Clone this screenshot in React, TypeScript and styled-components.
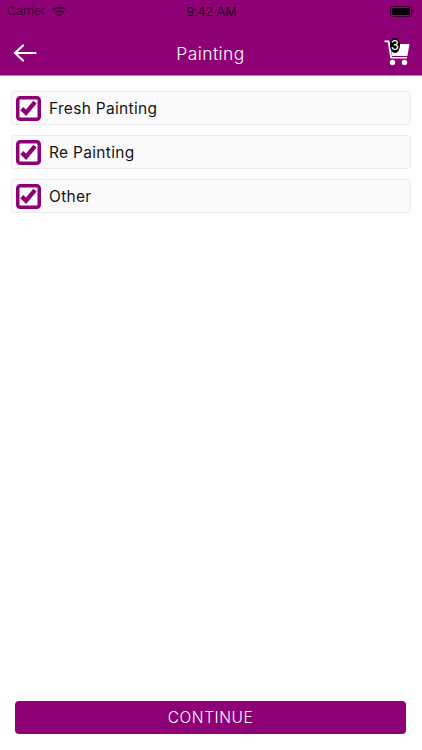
import React from "react";
import styled, { createGlobalStyle } from "styled-components";

const PURPLE = "#8e0076";

const GlobalStyle = createGlobalStyle`
  html, body {
    margin: 0;
    padding: 0;
    background: #fff;
  }
`;

const Page = styled.div`
  width: 422px;
  height: 750px;
  display: flex;
  flex-direction: column;
  font-family: Inter, "Noto Sans", sans-serif;
  overflow: hidden;
`;

const Header = styled.header`
  height: 75px;
  flex: none;
  background: ${PURPLE};
  border-bottom: 1px solid #c77fba;
  box-sizing: content-box;
  display: flex;
  flex-direction: column;
`;

const StatusBar = styled.div`
  height: 22px;
  padding: 0 8px 0 7px;
  display: grid;
  grid-template-columns: 1fr auto 1fr;
  align-items: center;
  color: #3d0033;
  font-family: "Liberation Sans", sans-serif;
`;

const Carrier = styled.div`
  display: flex;
  align-items: center;
  gap: 7px;
  font-size: 12.5px;
`;

const Clock = styled.div`
  color: #26001f;
  font-size: 13.5px;
  letter-spacing: 0.1px;
  margin-left: 2px;
`;

const BatteryBox = styled.div`
  justify-self: end;
  display: flex;
`;

const NavBar = styled.div`
  flex: 1;
  display: flex;
  align-items: center;
  justify-content: space-between;
  padding: 9px 12px 0 13px;
`;

const Title = styled.div`
  color: #fff;
  font-size: 17.5px;
  letter-spacing: 0.4px;
  font-weight: 300;
`;

const Cart = styled.div`
  position: relative;
  width: 26px;
  height: 26px;
`;

const CartCount = styled.span`
  position: absolute;
  top: -2px;
  left: 6px;
  width: 10px;
  height: 15px;
  border-radius: 50%;
  background: #000;
  color: #fff;
  font-family: "Liberation Sans", sans-serif;
  font-size: 14px;
  line-height: 15px;
  text-align: center;
`;

const List = styled.main`
  flex: 1;
  display: flex;
  flex-direction: column;
  gap: 10px;
  padding: 15px 11px 0;
`;

const Row = styled.div`
  height: 34px;
  box-sizing: border-box;
  display: flex;
  align-items: center;
  gap: 8px;
  padding-left: 4px;
  background: #fafafa;
  border: 1px solid #ececec;
  border-radius: 4px;
`;

const Label = styled.span`
  color: #141414;
  font-size: 15.5px;
  letter-spacing: 0.3px;
`;

const Footer = styled.div`
  padding: 0 16px 16px 15px;
`;

const ContinueButton = styled.button`
  width: 100%;
  height: 33px;
  display: block;
  border: none;
  border-radius: 4px;
  background: ${PURPLE};
  color: #fff;
  font-family: Inter, "Noto Sans", sans-serif;
  font-size: 15.5px;
  font-weight: 300;
  letter-spacing: 0.55px;
  padding: 0;
`;

const CheckIcon = () => (
  <svg width="25" height="25" viewBox="0 0 25 25">
    <rect x="1.75" y="1.75" width="21.5" height="21.5" rx="2.5" fill="#fff" stroke={PURPLE} strokeWidth="3.5" />
    <path d="M5.8 12.6 L10 16.8 L19 6.2" fill="none" stroke={PURPLE} strokeWidth="4.4" />
  </svg>
);

const Wifi = () => (
  <svg width="15" height="11" viewBox="0 0 15 11" fill="#3d0033">
    <path d="M7.5 0.5C4.7 0.5 2.2 1.5 0.3 3.3L1.7 4.8C3.2 3.3 5.3 2.5 7.5 2.5S11.8 3.3 13.3 4.8L14.7 3.3C12.8 1.5 10.3 0.5 7.5 0.5Z" />
    <path d="M7.5 4.2C5.7 4.2 4.1 4.9 2.9 6L4.3 7.5C5.2 6.7 6.3 6.2 7.5 6.2S9.8 6.7 10.7 7.5L12.1 6C10.9 4.9 9.3 4.2 7.5 4.2Z" />
    <path d="M7.5 7.8C6.7 7.8 6 8.1 5.5 8.6L7.5 10.7L9.5 8.6C9 8.1 8.3 7.8 7.5 7.8Z" />
  </svg>
);

const Battery = () => (
  <svg width="24" height="11" viewBox="0 0 24 11">
    <rect x="0.5" y="0.5" width="21" height="10" rx="2.5" fill="none" stroke="#3d0033" />
    <rect x="2" y="2" width="18" height="7" rx="1" fill="#0d0009" />
    <rect x="22.5" y="3.5" width="1.2" height="4" rx="0.6" fill="#3d0033" />
  </svg>
);

const BackArrow = () => (
  <svg width="24" height="20" viewBox="0 0 24 20" fill="none" stroke="#fff" strokeWidth="2.2" strokeLinecap="round" strokeLinejoin="round">
    <path d="M22.5 10 H2" />
    <path d="M10 2.5 L2 10 L10 17.5" />
  </svg>
);

const CartIcon = () => (
  <svg width="26" height="26" viewBox="0 0 26 26" fill="#fff">
    <path d="M0.5 0.5 H5 L6 3 L8 17 H23 V18.6 H6.4 L3.8 2.2 H0.5 Z" />
    <path d="M6.5 4 H25.5 L23.4 16 H8.2 Z" />
    <circle cx="8.5" cy="22.5" r="2.7" />
    <circle cx="20.5" cy="22.5" r="2.7" />
  </svg>
);

const services = ["Fresh Painting", "Re Painting", "Other"];

export default function App() {
  return (
    <Page>
      <GlobalStyle />
      <Header>
        <StatusBar>
          <Carrier>
            Carrier
            <Wifi />
          </Carrier>
          <Clock>9:42 AM</Clock>
          <BatteryBox>
            <Battery />
          </BatteryBox>
        </StatusBar>
        <NavBar>
          <BackArrow />
          <Title>Painting</Title>
          <Cart>
            <CartIcon />
            <CartCount>3</CartCount>
          </Cart>
        </NavBar>
      </Header>
      <List>
        {services.map((name) => (
          <Row key={name}>
            <CheckIcon />
            <Label>{name}</Label>
          </Row>
        ))}
      </List>
      <Footer>
        <ContinueButton>CONTINUE</ContinueButton>
      </Footer>
    </Page>
  );
}
